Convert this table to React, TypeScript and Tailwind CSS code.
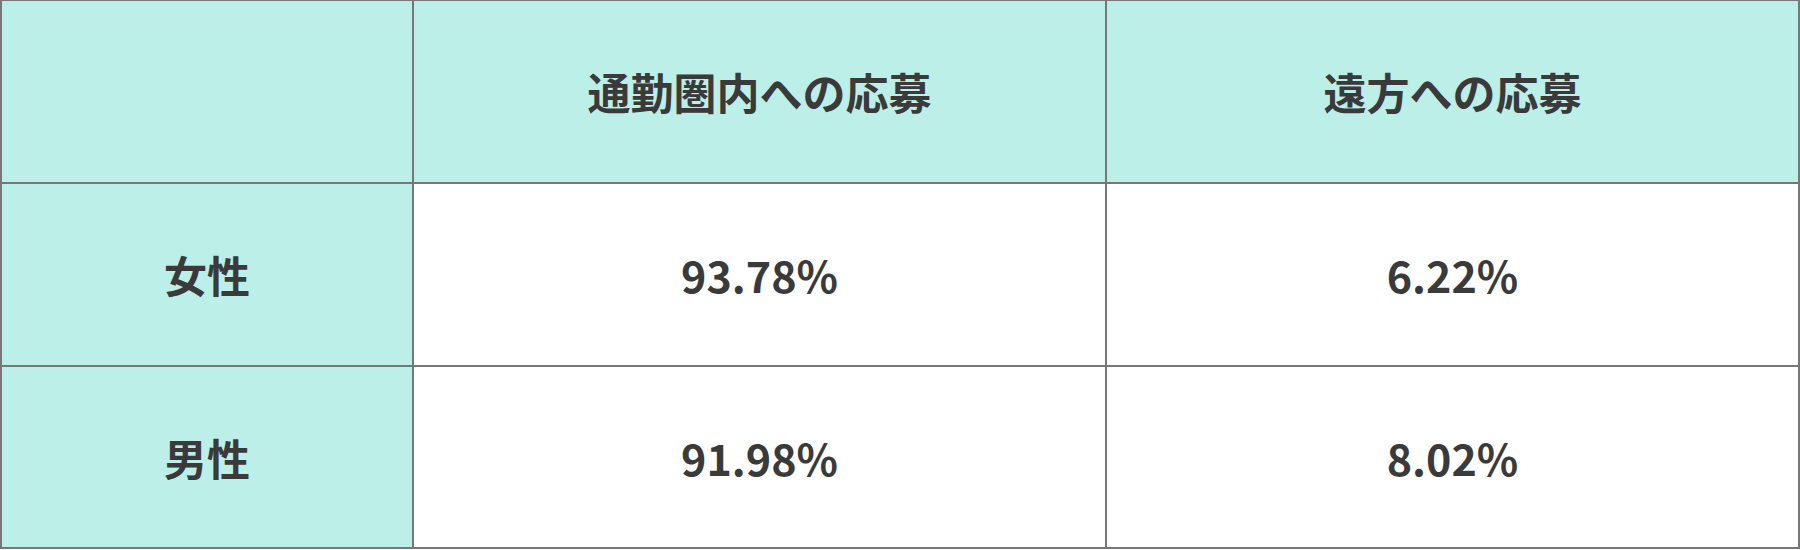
export default function App() {
  const font = { fontFamily: '"Noto Sans CJK JP", "Noto Sans", sans-serif' };
  const head = "flex items-center justify-center bg-[#bbefe7] text-[43px] font-bold text-[#3a3a3a]";
  const cell = "flex items-center justify-center bg-white text-[43px] font-bold text-[#3a3a3a]";
  return (
    <div className="w-[1800px] h-[550px] bg-white" style={font}>
      <div className="grid grid-cols-[410px_691px_691px] grid-rows-[181px_181px_180px] gap-[2px] bg-[#777777] pt-[1px] px-[2px] pb-[2px] leading-none">
        <div className={head}></div>
        <div className={head}>通勤圏内への応募</div>
        <div className={head}>遠方への応募</div>
        <div className={head}>女性</div>
        <div className={cell}>93.78%</div>
        <div className={cell}>6.22%</div>
        <div className={head}>男性</div>
        <div className={cell}>91.98%</div>
        <div className={cell}>8.02%</div>
      </div>
    </div>
  );
}
